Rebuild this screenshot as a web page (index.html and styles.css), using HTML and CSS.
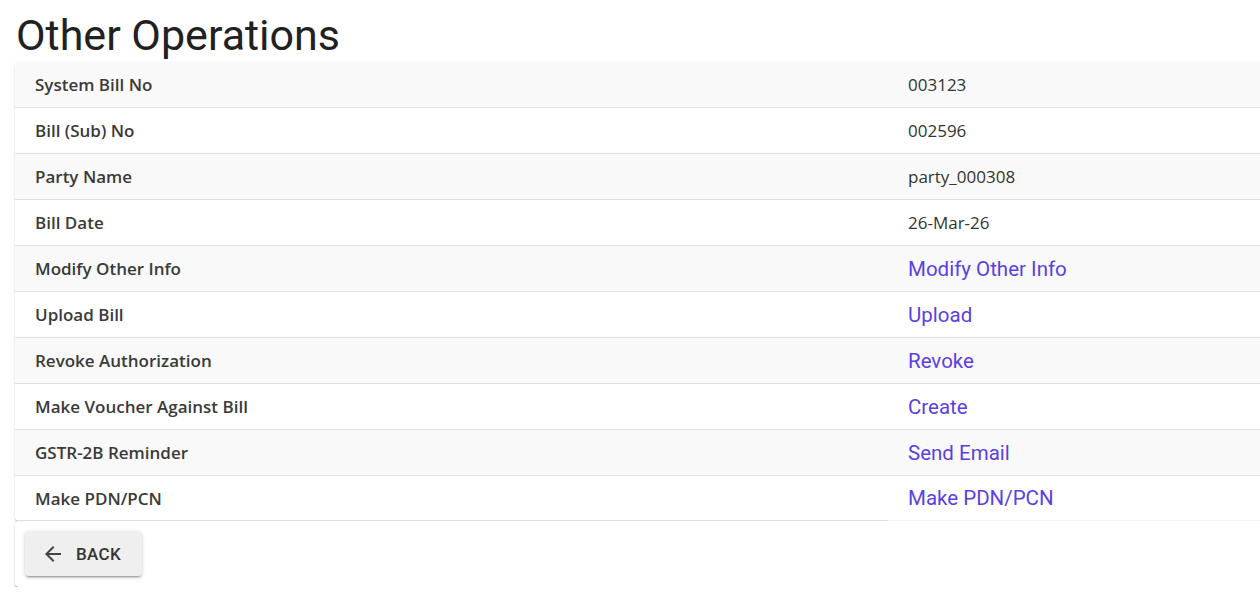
FILE: index.html
```html
<!DOCTYPE html>
<html lang="en">
<head>
<meta charset="UTF-8">
<meta name="viewport" content="width=device-width, initial-scale=1.0">
<title>Other Operations</title>
<link rel="stylesheet" href="styles.css">
</head>
<body>
  <h1 class="page-title">Other Operations</h1>

  <div class="card details">
    <div class="row">
      <div class="label">System Bill No</div>
      <div class="value">003123</div>
    </div>
    <div class="row">
      <div class="label">Bill (Sub) No</div>
      <div class="value">002596</div>
    </div>
    <div class="row">
      <div class="label">Party Name</div>
      <div class="value">party_000308</div>
    </div>
    <div class="row">
      <div class="label">Bill Date</div>
      <div class="value">26-Mar-26</div>
    </div>
    <div class="row">
      <div class="label">Modify Other Info</div>
      <div class="value"><a href="#" class="action">Modify Other Info</a></div>
    </div>
    <div class="row">
      <div class="label">Upload Bill</div>
      <div class="value"><a href="#" class="action">Upload</a></div>
    </div>
    <div class="row">
      <div class="label">Revoke Authorization</div>
      <div class="value"><a href="#" class="action">Revoke</a></div>
    </div>
    <div class="row">
      <div class="label">Make Voucher Against Bill</div>
      <div class="value"><a href="#" class="action">Create</a></div>
    </div>
    <div class="row">
      <div class="label">GSTR-2B Reminder</div>
      <div class="value"><a href="#" class="action">Send Email</a></div>
    </div>
    <div class="row last">
      <div class="label">Make PDN/PCN</div>
      <div class="value"><a href="#" class="action">Make PDN/PCN</a></div>
    </div>
  </div>

  <div class="card footer">
    <button class="back-btn">
      <svg width="24" height="24" viewBox="0 0 24 24"><path d="M20 11H7.83l5.59-5.59L12 4l-8 8 8 8 1.41-1.41L7.83 13H20v-2z" fill="#444"/></svg>
      <span>Back</span>
    </button>
  </div>
</body>
</html>
```

FILE: styles.css
```css
body {
  margin: 0;
  padding: 0;
  background-color: #ffffff;
  color: #333333;
  font-family: "Open Sans", Arial, sans-serif;
  overflow-x: hidden;
}
.page-title {
  font-family: Roboto, Arial, sans-serif;
  font-weight: 400;
  font-size: 43px;
  line-height: 50px;
  color: #212121;
  margin: 10px 0 2px 16px;
}
.card {
  margin-left: 15px;
  margin-right: -40px;
  background-color: #ffffff;
  border-radius: 4px;
  box-shadow: 0 2px 1px -1px rgba(0, 0, 0, 0.2), 0 1px 1px 0 rgba(0, 0, 0, 0.14), 0 1px 3px 0 rgba(0, 0, 0, 0.12);
}
.details {
  overflow: hidden;
}
.row {
  display: grid;
  grid-template-columns: 873px 1fr;
  height: 45px;
  border-bottom: 1px solid #e0e0e0;
}
.row:nth-child(odd) {
  background-color: #f9f9f9;
}
.row.last {
  border-bottom: none;
}
.row.last .label {
  border-bottom: 1px solid #e0e0e0;
}
.row.last .value {
  border-bottom: 1px solid #f3f3f3;
}
.label,
.value {
  display: flex;
  align-items: center;
  padding-left: 20px;
  font-size: 17px;
}
.label {
  font-weight: 600;
  color: #3a3a3a;
}
.value {
  color: #333333;
}
.action {
  font-family: Roboto, Arial, sans-serif;
  font-size: 20.5px;
  color: #5b3fe4;
  text-decoration: none;
}
.footer {
  padding: 10px 10px 11px;
}
.footer.card {
  box-shadow: 0 2px 1px -1px rgba(0, 0, 0, 0.3), 0 1px 1px 0 rgba(0, 0, 0, 0.2), 0 1px 3px 0 rgba(0, 0, 0, 0.12);
}
.back-btn {
  display: flex;
  align-items: center;
  gap: 11px;
  width: 117px;
  height: 45px;
  padding: 0 0 0 16px;
  border: none;
  border-radius: 4px;
  background-color: #efefef;
  box-shadow: 0 3px 1px -2px rgba(0, 0, 0, 0.2), 0 2px 2px 0 rgba(0, 0, 0, 0.14), 0 1px 5px 0 rgba(0, 0, 0, 0.12);
  font-family: Roboto, Arial, sans-serif;
  font-weight: 500;
  font-size: 17px;
  letter-spacing: 0.3px;
  text-transform: uppercase;
  color: #333333;
  cursor: pointer;
}
```
